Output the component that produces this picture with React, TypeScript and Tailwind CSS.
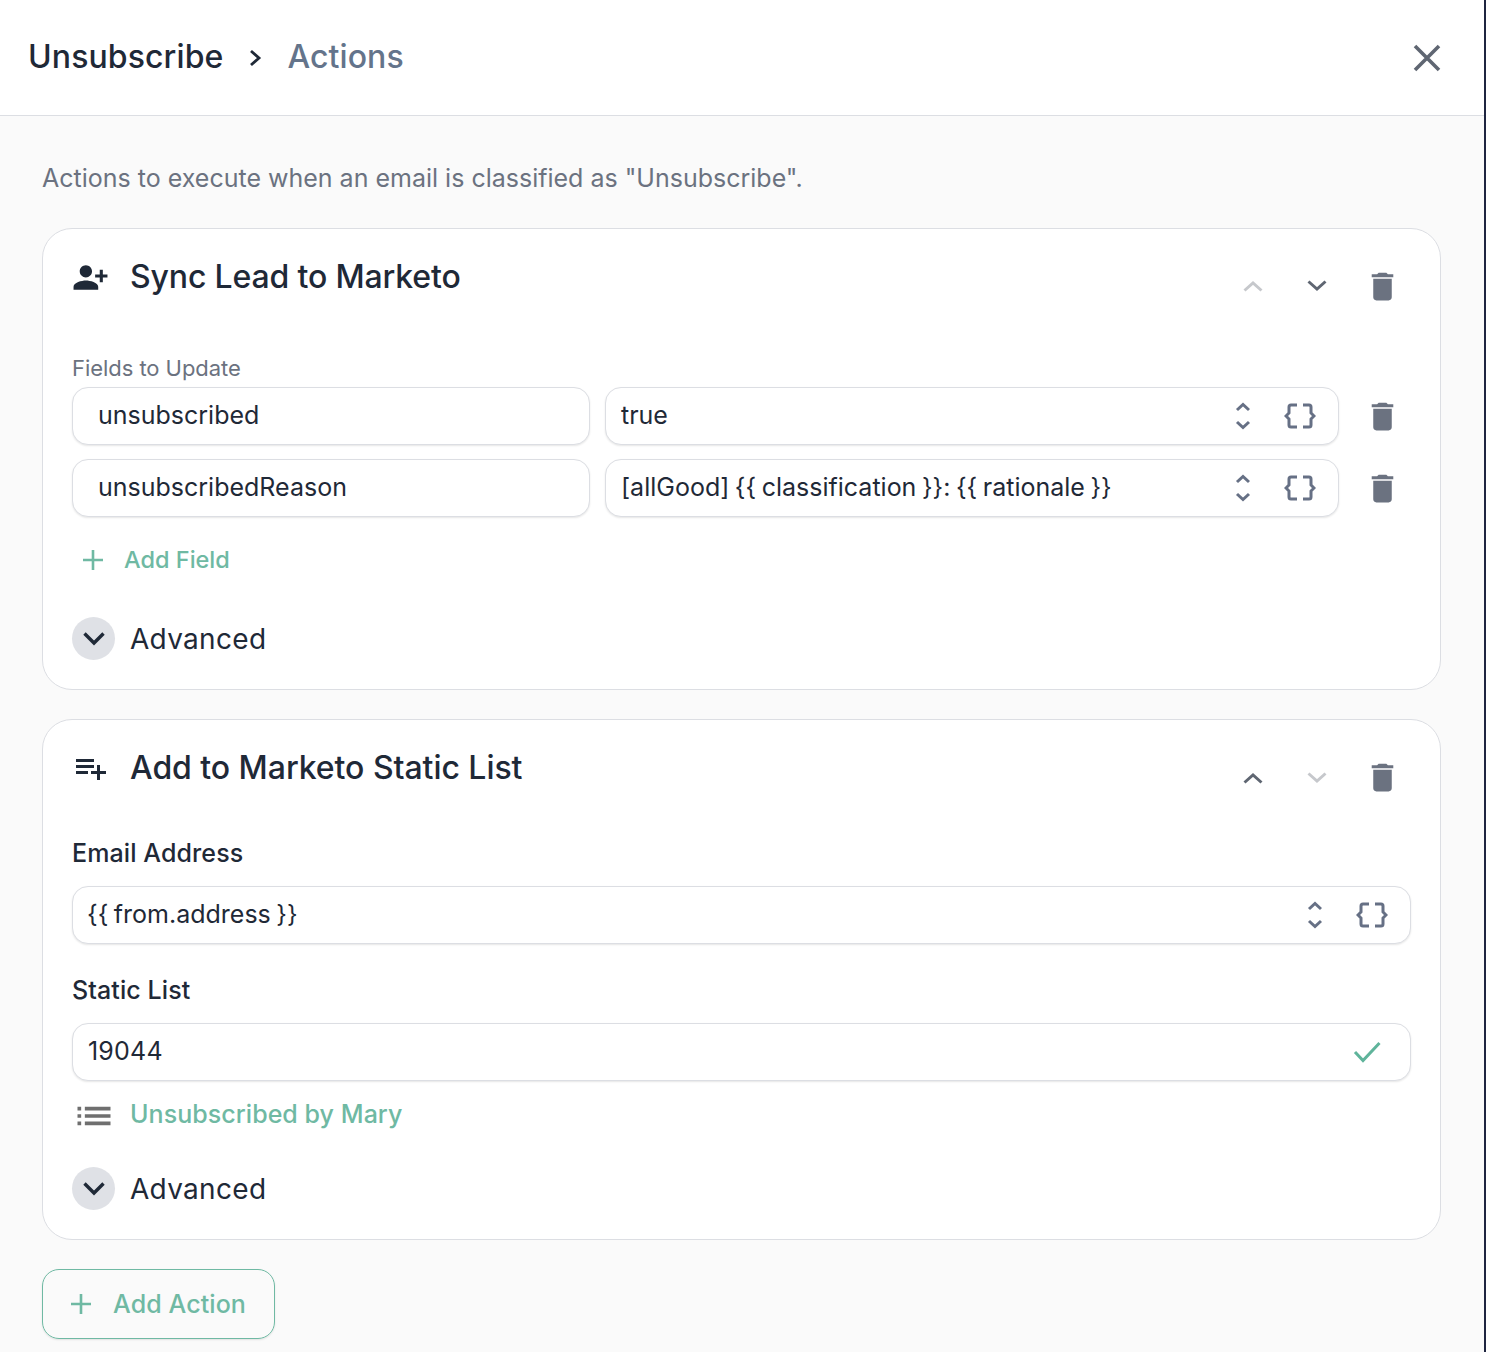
import React from "react";

const INK = "#1f2937";

function Trash() {
  return (
    <svg width="37" height="37" viewBox="0 0 24 24" fill="#6b7280">
      <path d="M6 19c0 1.1.9 2 2 2h8c1.1 0 2-.9 2-2V7H6v12zM19 4h-3.5l-1-1h-5l-1 1H5v2h14V4z" />
    </svg>
  );
}

function Chevron({ up, faded }: { up?: boolean; faded?: boolean }) {
  return (
    <svg width="22" height="14" viewBox="0 0 22 14" fill="none" stroke={faded ? "#c6c8cc" : "#5f6672"} strokeWidth="3">
      <path d={up ? "M2.5 11.5 L11 4 L19.5 11.5" : "M2.5 2.5 L11 10 L19.5 2.5"} />
    </svg>
  );
}

function Unfold() {
  return (
    <svg width="16" height="28" viewBox="0 0 16 28" fill="none" stroke="#667085" strokeWidth="3">
      <path d="M2 8 L8 2.5 L14 8" />
      <path d="M2 20 L8 25.5 L14 20" />
    </svg>
  );
}

function Braces() {
  return (
    <svg width="32" height="26" viewBox="0 0 32 26" fill="none" stroke="#667085" strokeWidth="3">
      <path d="M13 2 H7 Q5 2 5 4 V10 L2 13 L5 16 V22 Q5 24 7 24 H13" />
      <path d="M19 2 H25 Q27 2 27 4 V10 L30 13 L27 16 V22 Q27 24 25 24 H19" />
    </svg>
  );
}

function Plus({ size }: { size: number }) {
  return (
    <svg width={size} height={size} viewBox="0 0 22 22" fill="none" stroke="#6fb9a3" strokeWidth="2.6">
      <path d="M11 1 V21 M1 11 H21" />
    </svg>
  );
}

function Advanced() {
  return (
    <div className="flex items-center gap-[15px] h-[43px]">
      <div className="w-[43px] h-[43px] rounded-full bg-[#dfe1e6] flex items-center justify-center">
        <svg width="24" height="15" viewBox="0 0 24 15" fill="none" stroke={INK} strokeWidth="3.4">
          <path d="M2.5 2.5 L12 12 L21.5 2.5" />
        </svg>
      </div>
      <span className="text-[28px] text-[#1f2937] tracking-[0.3px]">Advanced</span>
    </div>
  );
}

function FieldRow({ name, value }: { name: string; value: string }) {
  return (
    <div className="flex items-center">
      <div className="w-[518px] h-[58px] rounded-[16px] border border-[#dcdee3] shadow-[0_1px_2px_rgba(0,0,0,0.1)] bg-white pl-[25px] flex items-center text-[25px] text-[#1f2937]">
        {name}
      </div>
      <div className="w-[734px] h-[58px] ml-[15px] rounded-[16px] border border-[#dcdee3] shadow-[0_1px_2px_rgba(0,0,0,0.1)] bg-white pl-[15px] pr-[22px] flex items-center text-[25px] text-[#1f2937]">
        <span className="flex-1 [word-spacing:-1.5px]">{value}</span>
        <Unfold />
        <div className="w-[33px]" />
        <Braces />
      </div>
      <div className="ml-[25px]">
        <Trash />
      </div>
    </div>
  );
}

export default function App() {
  return (
    <div className="min-h-[1352px] bg-[#fafafa] border-r-2 border-[#1f2540] font-['Inter',sans-serif] overflow-hidden">
      <header className="h-[116px] bg-white border-b border-[#dcdee3] flex items-center pl-[28px] pr-[39px]">
        <span className="text-[32px] font-medium tracking-[0.1px] text-[#1f2937] pb-[2px]">Unsubscribe</span>
        <svg className="ml-[24px] mr-[24px]" width="16" height="20" viewBox="0 0 16 20" fill="none" stroke="#1f2937" strokeWidth="2.8">
          <path d="M4 3 L12 10 L4 17" />
        </svg>
        <span className="text-[32px] font-medium tracking-[0.1px] text-[#64748b] pb-[2px]">Actions</span>
        <div className="flex-1" />
        <svg width="36" height="36" viewBox="0 0 36 36" fill="none" stroke="#5f6672" strokeWidth="3.6">
          <path d="M6 6 L30 30 M30 6 L6 30" />
        </svg>
      </header>

      <main className="pl-[42px] pr-[43px]">
        <p className="h-[32px] mt-[47px] flex items-center text-[25px] text-[#6b7280]">
          Actions to execute when an email is classified as "Unsubscribe".
        </p>

        <section className="mt-[33px] h-[462px] rounded-[30px] border border-[#dcdee3] bg-white pl-[29px] pt-[28px]">
          <div className="flex justify-between h-[48px]">
            <div className="flex items-center h-[40px]">
              <svg className="-scale-x-100" width="37" height="37" viewBox="0 0 24 24" fill={INK}>
                <path d="M15 12c2.21 0 4-1.79 4-4s-1.79-4-4-4-4 1.79-4 4 1.79 4 4 4zm-9-2V7H4v3H1v2h3v3h2v-3h3v-2H6zm9 4c-2.67 0-8 1.34-8 4v2h16v-2c0-2.66-5.33-4-8-4z" />
              </svg>
              <h2 className="ml-[21px] text-[32px] font-medium tracking-[-0.15px] text-[#1f2937]">Sync Lead to Marketo</h2>
            </div>
            <div className="flex items-center mt-[10px] mr-[39px]">
              <Chevron up faded />
              <div className="w-[42px]" />
              <Chevron />
              <div className="w-[36px]" />
              <Trash />
            </div>
          </div>
          <div className="mt-[51px] h-[24px] flex items-center text-[22px] tracking-[-0.05px] text-[#6b7280]">Fields to Update</div>
          <div className="mt-[7px] flex flex-col gap-[14px]">
            <FieldRow name="unsubscribed" value="true" />
            <FieldRow name="unsubscribedReason" value="[allGood] {{ classification }}: {{ rationale }}" />
          </div>
          <div className="mt-[28px] h-[30px] flex items-center pl-[10px] gap-[20px] text-[23.5px] font-medium text-[#6fb9a3]">
            <Plus size={22} />
            <span>Add Field</span>
          </div>
          <div className="mt-[42px]">
            <Advanced />
          </div>
        </section>

        <section className="mt-[29px] h-[521px] rounded-[30px] border border-[#dcdee3] bg-white px-[29px] pt-[28px]">
          <div className="flex justify-between h-[48px] -mr-[29px]">
            <div className="flex items-center h-[40px]">
              <svg className="ml-[1px]" width="36" height="36" viewBox="0 0 24 24" fill={INK}>
                <path d="M14 10H2v2h12v-2zm0-4H2v2h12V6zm4 8v-4h-2v4h-4v2h4v4h2v-4h4v-2h-4zM2 16h8v-2H2v2z" />
              </svg>
              <h2 className="ml-[21px] text-[32px] font-medium tracking-[-0.05px] text-[#1f2937]">Add to Marketo Static List</h2>
            </div>
            <div className="flex items-center mt-[11px] mr-[39px]">
              <Chevron up />
              <div className="w-[42px]" />
              <Chevron faded />
              <div className="w-[36px]" />
              <Trash />
            </div>
          </div>
          <div className="mt-[43px] h-[30px] flex items-center text-[25px] font-medium tracking-[0.1px] text-[#1f2937]">Email Address</div>
          <div className="mt-[17px] h-[58px] rounded-[16px] border border-[#dcdee3] shadow-[0_1px_2px_rgba(0,0,0,0.1)] bg-white pl-[14px] pr-[22px] flex items-center text-[25px] text-[#1f2937]">
            <span className="flex-1 [word-spacing:-1.5px]">{"{{ from.address }}"}</span>
            <Unfold />
            <div className="w-[33px]" />
            <Braces />
          </div>
          <div className="mt-[32px] h-[30px] flex items-center text-[25px] font-medium tracking-[0.1px] text-[#1f2937]">Static List</div>
          <div className="mt-[17px] h-[58px] rounded-[16px] border border-[#dcdee3] shadow-[0_1px_2px_rgba(0,0,0,0.1)] bg-white pl-[15px] pr-[29px] flex items-center text-[25px] tracking-[0.2px] text-[#1f2937]">
            <span className="flex-1">19044</span>
            <svg width="28" height="22" viewBox="0 0 28 22" fill="none" stroke="#5fb49b" strokeWidth="3">
              <path d="M2 11 L10 19.5 L26.5 2" />
            </svg>
          </div>
          <div className="mt-[18px] h-[30px] flex items-center">
            <svg className="mt-[4px]" width="44" height="44" viewBox="0 0 24 24" fill="#6f6f6f">
              <path d="M3 13h2v-2H3v2zm0 4h2v-2H3v2zm0-8h2V7H3v2zm4 4h14v-2H7v2zm0 4h14v-2H7v2zM7 7v2h14V7H7z" />
            </svg>
            <span className="ml-[14px] pt-[2px] text-[25px] font-medium tracking-[0.05px] text-[#6fb9a3]">Unsubscribed by Mary</span>
          </div>
          <div className="mt-[38px]">
            <Advanced />
          </div>
        </section>

        <button className="mt-[29px] w-[233px] h-[70px] rounded-[17px] border border-[#6fb9a3] shadow-[0_1px_2px_rgba(0,0,0,0.1)] flex items-center pl-[27px] gap-[21px] text-[25px] font-medium tracking-[0.1px] text-[#6fb9a3]">
          <Plus size={22} />
          <span className="pt-[2px]">Add Action</span>
        </button>
      </main>
    </div>
  );
}
